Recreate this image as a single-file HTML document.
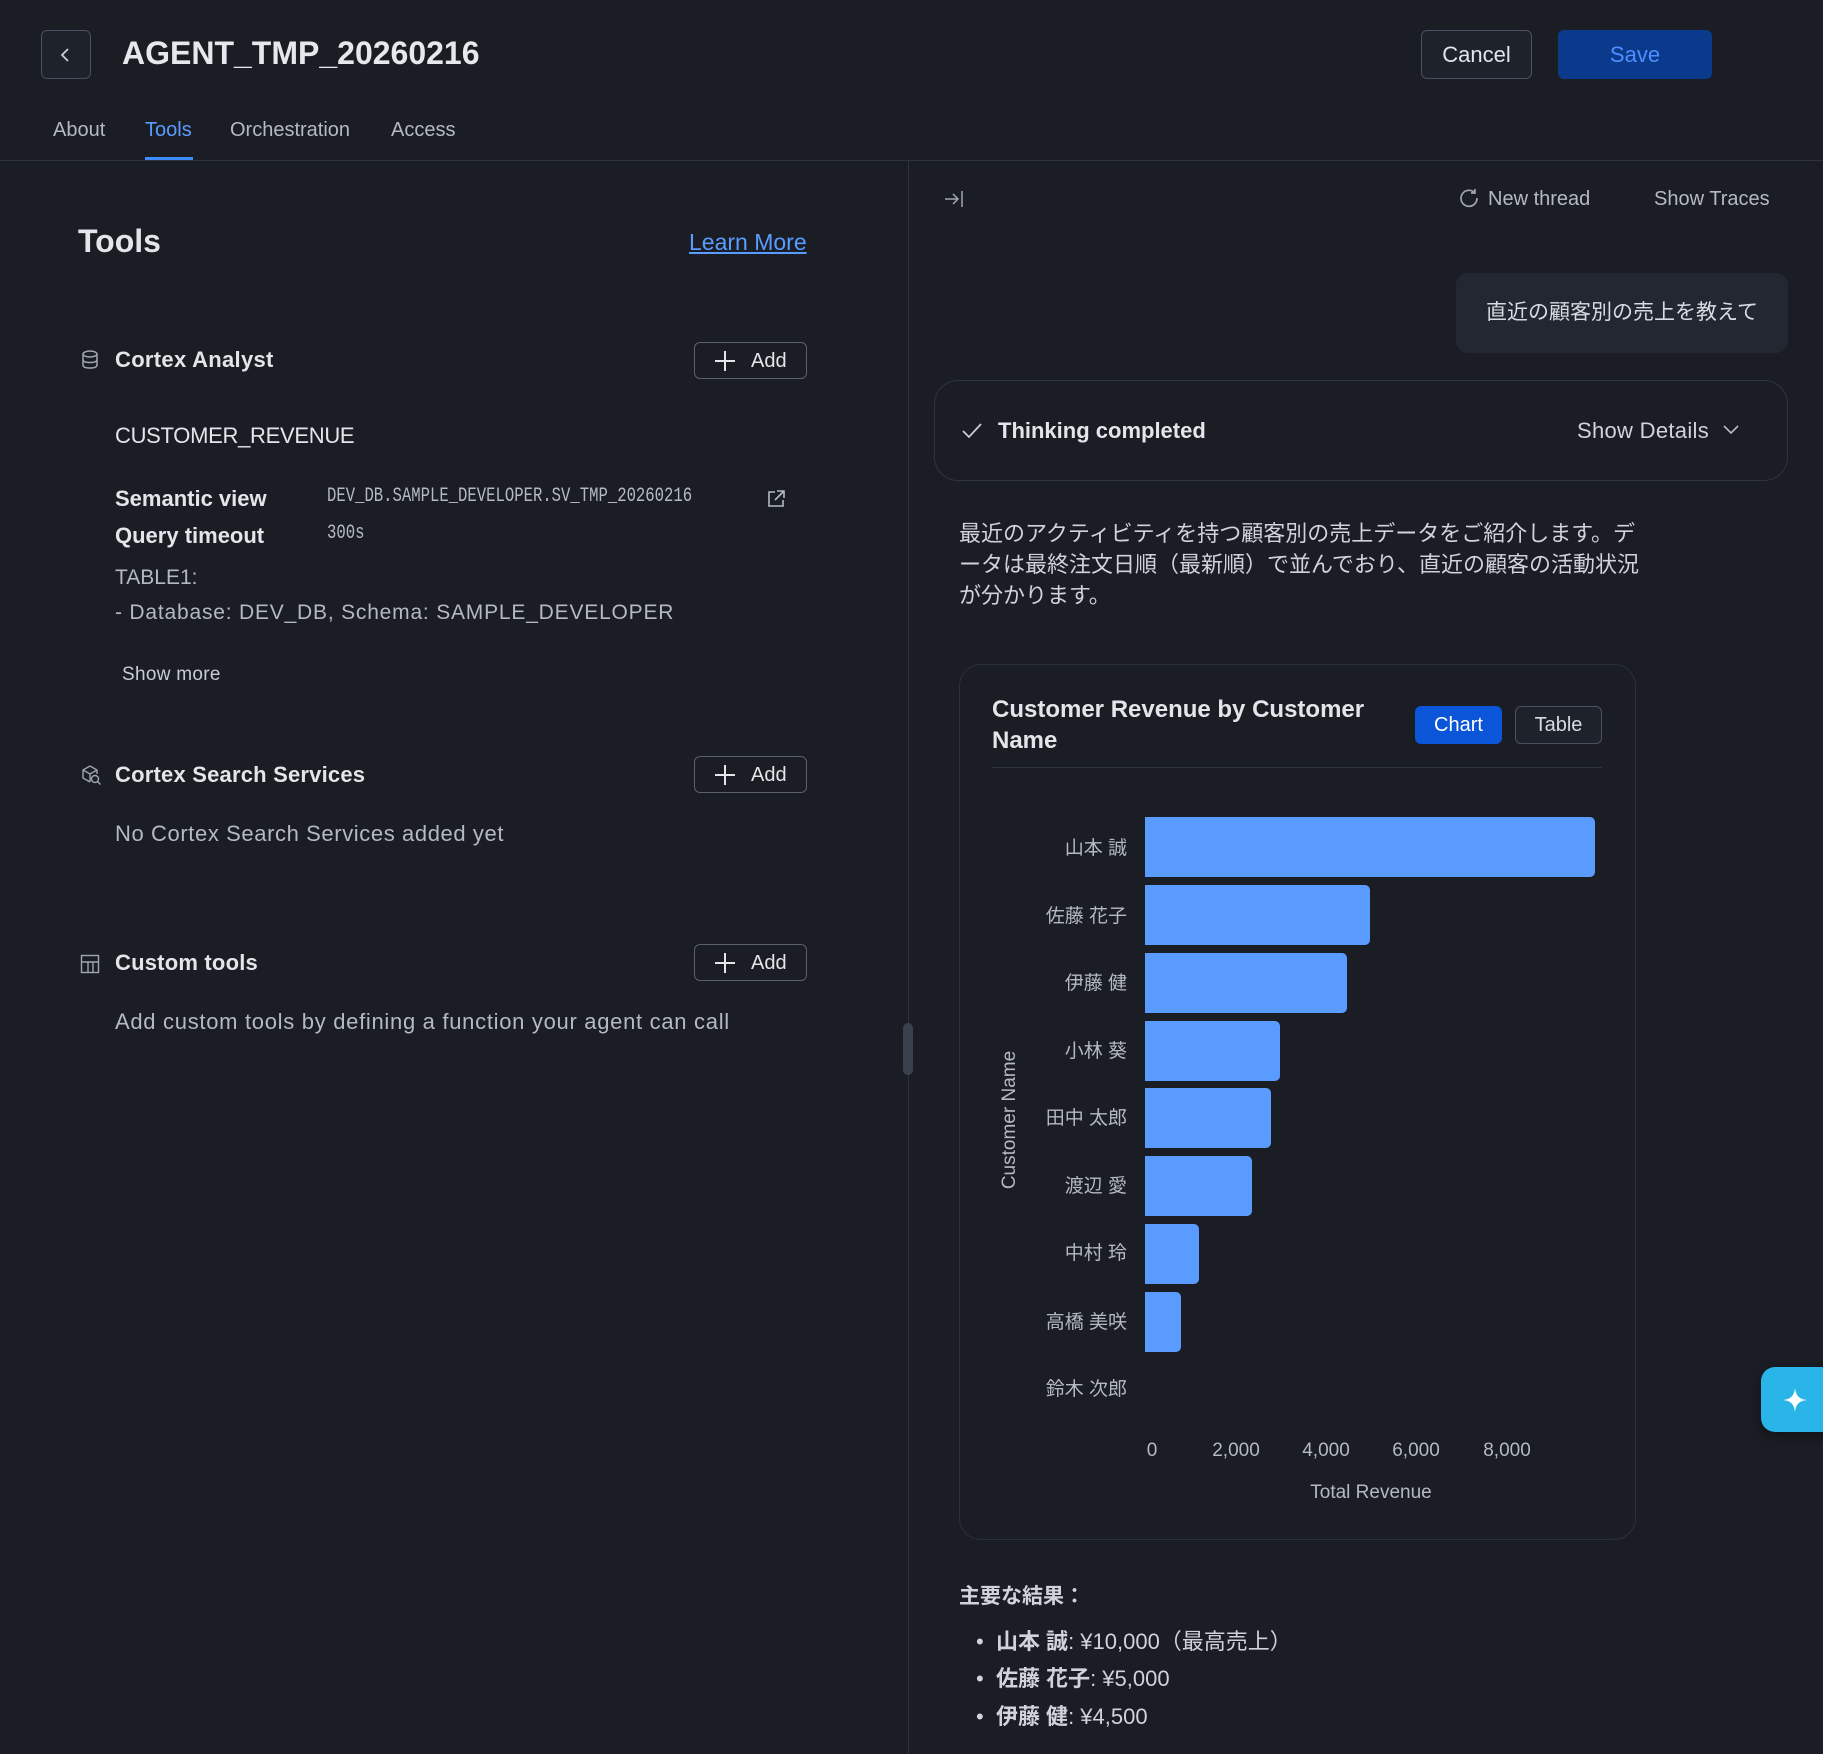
<!DOCTYPE html>
<html><head><meta charset="utf-8"><style>
*{box-sizing:border-box;margin:0;padding:0}
body{width:1823px;height:1754px;background:#1a1d24;color:#e3e5ea;font-family:"Liberation Sans","Noto Sans CJK JP",sans-serif;position:relative;overflow:hidden}
.a{position:absolute;white-space:nowrap}
.btn{position:absolute;border:1px solid #4a5060;border-radius:6px;background:#1e222b}
.add{position:absolute;border:1px solid #5a606e;border-radius:6px;width:113px;height:37px;font-size:20px;color:#e3e5ea}
.add span{position:absolute;left:56px;top:7px}
.add i{position:absolute;left:20px;top:17px;width:20px;height:2px;background:#e3e5ea}
.add i:after{content:"";position:absolute;left:9px;top:-9px;width:2px;height:20px;background:#e3e5ea}
.sec{color:#b4b9c2}
.lbl{font-size:19px;color:#b4b9c2;text-align:right;width:140px}
.bar{position:absolute;left:1145px;height:60px;background:#5a9bff;border-radius:0 5px 5px 0}
.tick{font-size:19px;color:#b4b9c2;transform:translateX(-50%)}
</style></head><body>
<div class="btn" style="left:41px;top:30px;width:50px;height:49px"></div>
<svg class="a" style="left:58px;top:46px" width="16" height="18"><path d="M10 3 L4 9 L10 15" stroke="#c8ccd4" stroke-width="1.8" fill="none"/></svg>
<div class="a" style="left:122px;top:35px;font-size:32px;font-weight:bold;color:#e6e8ec">AGENT_TMP_20260216</div>
<div class="btn" style="left:1421px;top:30px;width:111px;height:49px;font-size:22px;color:#e3e5ea;text-align:center;line-height:47px">Cancel</div>
<div class="a" style="left:1558px;top:30px;width:154px;height:49px;background:#0b3a8c;border-radius:6px;color:#4d8fff;font-size:22px;text-align:center;line-height:49px">Save</div>
<div class="a sec" style="left:53px;top:119px;font-size:20px">About</div>
<div class="a" style="left:145px;top:119px;font-size:20px;color:#5a9bff">Tools</div>
<div class="a" style="left:145px;top:157px;width:48px;height:3px;background:#3d8bff"></div>
<div class="a sec" style="left:230px;top:119px;font-size:20px">Orchestration</div>
<div class="a sec" style="left:391px;top:119px;font-size:20px">Access</div>
<div class="a" style="left:0;top:160px;width:1823px;height:1px;background:#2d3340"></div>
<div class="a" style="left:908px;top:161px;width:1px;height:1593px;background:#2d3340"></div>
<div class="a" style="left:903px;top:1023px;width:10px;height:52px;background:#3a404c;border-radius:5px"></div>
<div class="a" style="left:78px;top:223px;font-size:32px;font-weight:bold">Tools</div>
<div class="a" style="left:689px;top:229px;font-size:23px;color:#5a9bff;text-decoration:underline">Learn More</div>
<svg class="a" style="left:81px;top:350px" width="18" height="20"><ellipse cx="9" cy="4" rx="7" ry="3" stroke="#a0a6b0" stroke-width="1.5" fill="none"/><path d="M2 4v11c0 2 3 3 7 3s7-1 7-3V4M2 9.5c0 2 3 3 7 3s7-1 7-3" stroke="#a0a6b0" stroke-width="1.5" fill="none"/></svg>
<div class="a" style="left:115px;top:347px;font-size:22px;font-weight:bold;letter-spacing:0.3px">Cortex Analyst</div>
<div class="add" style="left:694px;top:342px"><i></i><span>Add</span></div>
<div class="a" style="left:115px;top:423px;font-size:22px;letter-spacing:-0.3px">CUSTOMER_REVENUE</div>
<div class="a" style="left:115px;top:486px;font-size:22px;font-weight:bold">Semantic view</div>
<div class="a" style="left:115px;top:523px;font-size:22px;font-weight:bold">Query timeout</div>
<div class="a sec" style="left:327px;top:485px;font-size:20px;font-family:'Liberation Mono',monospace;transform:scaleX(0.78);transform-origin:left">DEV_DB.SAMPLE_DEVELOPER.SV_TMP_20260216</div>
<div class="a sec" style="left:327px;top:522px;font-size:20px;font-family:'Liberation Mono',monospace;transform:scaleX(0.78);transform-origin:left">300s</div>
<svg class="a" style="left:766px;top:489px" width="20" height="20"><path d="M9 3H3v14h14v-6M11 2h7v7M18 2l-9 9" stroke="#b4b9c2" stroke-width="1.6" fill="none"/></svg>
<div class="a sec" style="left:115px;top:566px;font-size:21px">TABLE1:</div>
<div class="a sec" style="left:115px;top:601px;font-size:21px;letter-spacing:0.8px">- Database: DEV_DB, Schema: SAMPLE_DEVELOPER</div>
<div class="a" style="left:122px;top:664px;font-size:19px;color:#c8ccd4;letter-spacing:0.3px">Show more</div>
<svg class="a" style="left:80px;top:764px" width="22" height="22"><path d="M10 2l7 4v4M10 2L3 6v8l7 4M3 6l7 4 7-4M10 10v8" stroke="#a0a6b0" stroke-width="1.4" fill="none"/><circle cx="15" cy="15" r="3.5" stroke="#a0a6b0" stroke-width="1.4" fill="none"/><path d="M17.5 17.5l3 3" stroke="#a0a6b0" stroke-width="1.4"/></svg>
<div class="a" style="left:115px;top:762px;font-size:22px;font-weight:bold;letter-spacing:0.2px">Cortex Search Services</div>
<div class="add" style="left:694px;top:756px"><i></i><span>Add</span></div>
<div class="a sec" style="left:115px;top:821px;font-size:22px;letter-spacing:0.6px">No Cortex Search Services added yet</div>
<svg class="a" style="left:80px;top:954px" width="20" height="20"><rect x="1.5" y="1.5" width="17" height="17" stroke="#a0a6b0" stroke-width="1.4" fill="none"/><path d="M1.5 8h17M8 8v10.5M13 8v10.5" stroke="#a0a6b0" stroke-width="1.4"/></svg>
<div class="a" style="left:115px;top:950px;font-size:22px;font-weight:bold;letter-spacing:0.2px">Custom tools</div>
<div class="add" style="left:694px;top:944px"><i></i><span>Add</span></div>
<div class="a sec" style="left:115px;top:1009px;font-size:22px;letter-spacing:0.7px">Add custom tools by defining a function your agent can call</div>
<svg class="a" style="left:943px;top:188px" width="22" height="22"><path d="M2 11h13M10 6l5 5-5 5M19 3v16" stroke="#a0a6b0" stroke-width="1.5" fill="none"/></svg>
<svg class="a" style="left:1458px;top:187px" width="22" height="22"><path d="M17 6A8 8 0 1 0 19 11M17 2v4h-4" stroke="#a0a6b0" stroke-width="1.7" fill="none"/></svg>
<div class="a sec" style="left:1488px;top:188px;font-size:20px">New thread</div>
<div class="a sec" style="left:1654px;top:188px;font-size:20px">Show Traces</div>
<div class="a" style="left:1456px;top:273px;width:332px;height:80px;background:#222732;border-radius:12px;font-size:21px;text-align:center;line-height:80px;color:#d8dbe1">直近の顧客別の売上を教えて</div>
<div class="a" style="left:934px;top:380px;width:854px;height:101px;border:1px solid #2e3441;border-radius:24px"></div>
<svg class="a" style="left:961px;top:422px" width="22" height="18"><path d="M2 9l6 6L20 2" stroke="#c8ccd4" stroke-width="1.8" fill="none"/></svg>
<div class="a" style="left:998px;top:418px;font-size:22px;font-weight:bold">Thinking completed</div>
<div class="a" style="left:1577px;top:418px;font-size:22px;color:#d0d4da;letter-spacing:0.3px">Show Details</div>
<svg class="a" style="left:1722px;top:423px" width="18" height="14"><path d="M2 3l7 7 7-7" stroke="#b4b9c2" stroke-width="1.6" fill="none"/></svg>
<div class="a" style="left:959px;top:518px;width:686px;white-space:normal;font-size:22px;line-height:31px;color:#d0d4da">最近のアクティビティを持つ顧客別の売上データをご紹介します。データは最終注文日順（最新順）で並んでおり、直近の顧客の活動状況が分かります。</div>
<div class="a" style="left:959px;top:664px;width:677px;height:876px;border:1px solid #2a303c;border-radius:22px"></div>
<div class="a" style="left:992px;top:694px;font-size:24px;font-weight:bold;line-height:31px;white-space:normal;width:420px">Customer Revenue by Customer Name</div>
<div class="a" style="left:1415px;top:706px;width:87px;height:38px;background:#0b55d9;border-radius:6px;color:#fff;font-size:20px;text-align:center;line-height:38px">Chart</div>
<div class="btn" style="left:1515px;top:706px;width:87px;height:38px;font-size:20px;text-align:center;line-height:36px;color:#d8dbe1">Table</div>
<div class="a" style="left:992px;top:767px;width:610px;height:1px;background:#2d3340"></div>
<div class="bar" style="top:817px;width:450px"></div>
<div class="bar" style="top:885px;width:225px"></div>
<div class="bar" style="top:953px;width:202px"></div>
<div class="bar" style="top:1021px;width:135px"></div>
<div class="bar" style="top:1088px;width:126px"></div>
<div class="bar" style="top:1156px;width:107px"></div>
<div class="bar" style="top:1224px;width:54px"></div>
<div class="bar" style="top:1292px;width:36px"></div>
<div class="a lbl" style="left:987px;top:833px">山本 誠</div>
<div class="a lbl" style="left:987px;top:901px">佐藤 花子</div>
<div class="a lbl" style="left:987px;top:968px">伊藤 健</div>
<div class="a lbl" style="left:987px;top:1036px">小林 葵</div>
<div class="a lbl" style="left:987px;top:1103px">田中 太郎</div>
<div class="a lbl" style="left:987px;top:1171px">渡辺 愛</div>
<div class="a lbl" style="left:987px;top:1238px">中村 玲</div>
<div class="a lbl" style="left:987px;top:1307px">高橋 美咲</div>
<div class="a lbl" style="left:987px;top:1374px">鈴木 次郎</div>
<div class="a" style="left:1010px;top:1120px;font-size:19px;color:#b4b9c2;transform:translate(-50%,-50%) rotate(-90deg)">Customer Name</div>
<div class="a tick" style="left:1152px;top:1440px">0</div>
<div class="a tick" style="left:1236px;top:1440px">2,000</div>
<div class="a tick" style="left:1326px;top:1440px">4,000</div>
<div class="a tick" style="left:1416px;top:1440px">6,000</div>
<div class="a tick" style="left:1507px;top:1440px">8,000</div>
<div class="a tick" style="left:1371px;top:1482px">Total Revenue</div>
<div class="a" style="left:959px;top:1580px;font-size:21px;font-weight:bold;color:#d0d4da">主要な結果：</div>
<div class="a" style="left:976px;top:1624px;font-size:22px;color:#d0d4da">•&nbsp;&nbsp;<b>山本 誠</b>: ¥10,000（最高売上）</div>
<div class="a" style="left:976px;top:1661px;font-size:22px;color:#d0d4da">•&nbsp;&nbsp;<b>佐藤 花子</b>: ¥5,000</div>
<div class="a" style="left:976px;top:1699px;font-size:22px;color:#d0d4da">•&nbsp;&nbsp;<b>伊藤 健</b>: ¥4,500</div>
<div class="a" style="left:1761px;top:1367px;width:70px;height:65px;background:#29b5e8;border-radius:14px 0 0 14px;box-shadow:0 4px 12px rgba(0,0,0,.4)"></div>
<svg class="a" style="left:1783px;top:1388px" width="24" height="24"><path d="M12 0C13 8 16 11 24 12C16 13 13 16 12 24C11 16 8 13 0 12C8 11 11 8 12 0Z" fill="#fff"/></svg>
</body></html>
